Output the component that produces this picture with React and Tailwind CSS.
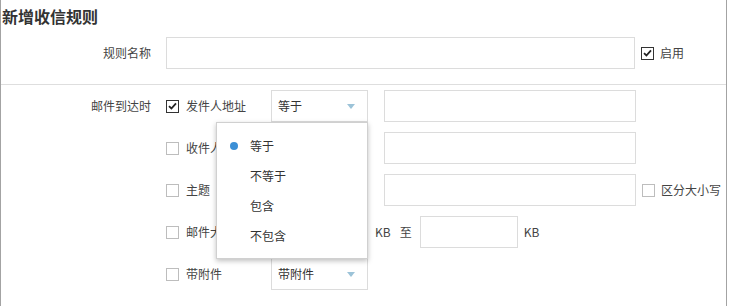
import React from 'react';

const font = { fontFamily: '"Noto Sans CJK SC", "Noto Sans", sans-serif' };

function Check({ checked }) {
  return (
    <span className={`inline-flex items-center justify-center w-[13px] h-[13px] border bg-white ${checked ? 'border-[#333]' : 'border-[#bdbdbd]'}`}>
      {checked && (
        <svg width="9" height="8" viewBox="0 0 9 8">
          <path d="M1 4.2 L3.4 6.5 L8 1.3" fill="none" stroke="#222" strokeWidth="1.8" />
        </svg>
      )}
    </span>
  );
}

function Arrow() {
  return (
    <svg width="8" height="5" viewBox="0 0 8 5" className="ml-auto mr-[12px]">
      <path d="M0 0 L8 0 L4 5 Z" fill="#9cc3d8" />
    </svg>
  );
}

function Select({ value, children }) {
  return (
    <div className="relative w-[97px] h-[32px] border border-[#dcdcdc] flex items-center pl-[6px] text-[12px] text-[#333]">
      <span>{value}</span>
      <Arrow />
      {children}
    </div>
  );
}

function Box({ w }) {
  return <div className={`${w} h-[32px] border border-[#dcdcdc] bg-white`} />;
}

function CondLabel({ checked, text }) {
  return (
    <div className="w-[105px] flex items-center">
      <Check checked={checked} />
      <span className="ml-[7px] text-[12px] text-[#444]">{text}</span>
    </div>
  );
}

const OPTIONS = ['等于', '不等于', '包含', '不包含'];

export default function App() {
  return (
    <div style={font} className="w-[727px] h-[306px] bg-white border-l border-r border-[#a3a3a3] overflow-hidden">
      <h2 className="pl-[1px] h-[32px] leading-[32px] text-[16px] font-bold text-[#333]">新增收信规则</h2>

      <div className="flex items-center h-[32px] mt-[5px]">
        <div className="w-[150px] text-right text-[12px] text-[#444]">规则名称</div>
        <div className="ml-[15px]"><Box w="w-[469px]" /></div>
        <div className="ml-[6px] flex items-center">
          <Check checked />
          <span className="ml-[6px] text-[12px] text-[#444]">启用</span>
        </div>
      </div>

      <div className="mt-[15px] border-t border-[#dedede] pt-[5px] flex">
        <div className="w-[150px] h-[32px] leading-[32px] text-right text-[12px] text-[#444]">邮件到达时</div>
        <div className="ml-[15px] flex flex-col gap-[10px]">
          <div className="flex items-center h-[32px]">
            <CondLabel checked text="发件人地址" />
            <Select value="等于">
              <div className="absolute top-full left-[-56px] mt-[1px] w-[152px] bg-white border border-[#d0d0d0] shadow-[0_2px_5px_rgba(0,0,0,0.25)] pt-[8px] pb-[7px] z-10">
                {OPTIONS.map((o, i) => (
                  <div key={o} className="h-[30px] flex items-center text-[12px] text-[#333]">
                    <span className="w-[33px] flex justify-center">
                      {i === 0 && <span className="w-[8px] h-[8px] rounded-full bg-[#3b8fd6]" />}
                    </span>
                    {o}
                  </div>
                ))}
              </div>
            </Select>
            <div className="ml-[16px]"><Box w="w-[252px]" /></div>
          </div>

          <div className="flex items-center h-[32px]">
            <CondLabel text="收件人地址" />
            <Select value="等于" />
            <div className="ml-[16px]"><Box w="w-[252px]" /></div>
          </div>

          <div className="flex items-center h-[32px]">
            <CondLabel text="主题" />
            <Select value="等于" />
            <div className="ml-[16px]"><Box w="w-[252px]" /></div>
            <div className="ml-[6px] flex items-center">
              <Check />
              <span className="ml-[6px] text-[12px] text-[#444]">区分大小写</span>
            </div>
          </div>

          <div className="flex items-center h-[32px]">
            <CondLabel text="邮件大小" />
            <Box w="w-[97px]" />
            <span className="ml-[7px] text-[12px] text-[#444]">KB</span>
            <span className="ml-[9px] text-[12px] text-[#444]">至</span>
            <div className="ml-[8px]"><Box w="w-[98px]" /></div>
            <span className="ml-[6px] text-[12px] text-[#444]">KB</span>
          </div>

          <div className="flex items-center h-[32px]">
            <CondLabel text="带附件" />
            <Select value="带附件" />
          </div>
        </div>
      </div>
    </div>
  );
}
